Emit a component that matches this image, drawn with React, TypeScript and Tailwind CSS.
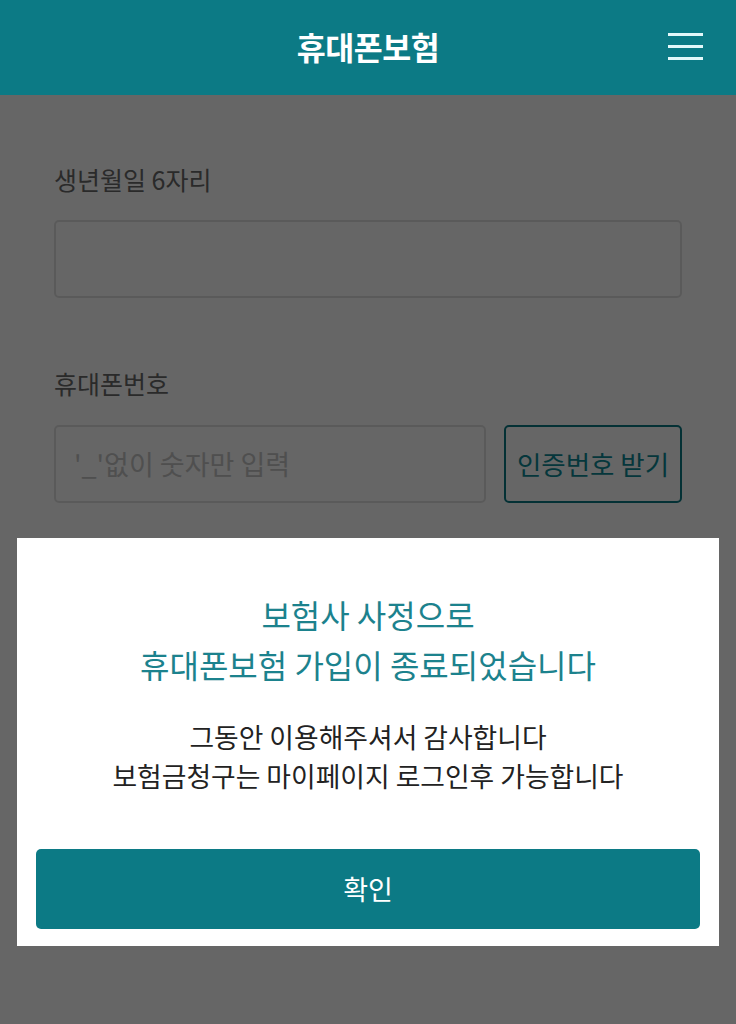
import React from "react";

const font = { fontFamily: '"Noto Sans CJK KR", "Noto Sans", sans-serif' };

export default function App() {
  return (
    <div className="relative min-h-[1024px] w-full bg-white overflow-hidden" style={font}>
      <header className="relative z-20 h-[95px] bg-[#0c7a85] flex items-center justify-center">
        <h1 className="text-[31.5px] font-bold text-white leading-none tracking-[-0.5px] -mt-[2px]">휴대폰보험</h1>
        <button className="absolute right-[33px] top-[33px] flex flex-col gap-[9px] w-[35px]">
          <span className="block h-[3px] w-full bg-[#e3f8fa]" />
          <span className="block h-[3px] w-full bg-[#e3f8fa]" />
          <span className="block h-[3px] w-full bg-[#e3f8fa]" />
        </button>
      </header>

      <main className="px-[54px] pt-[67px] flex flex-col">
        <label className="text-[25px] leading-[34px] text-[#6a6a6a]">생년월일 6자리</label>
        <div className="mt-[24px] h-[78px] rounded-[5px] border-2 border-[#e2e2e2]" />

        <label className="mt-[68px] text-[25px] leading-[34px] text-[#6a6a6a]">휴대폰번호</label>
        <div className="mt-[25px] flex gap-[18px]">
          <div className="flex-1 h-[78px] rounded-[5px] border-2 border-[#e2e2e2] flex items-center px-[18px]">
            <span className="text-[27px] text-[#c6c6c6]">'_'없이 숫자만 입력</span>
          </div>
          <button className="w-[178px] h-[78px] rounded-[5px] border-2 border-[#0c7a85] flex items-center justify-center text-[26.5px] text-[#0d8a96] whitespace-nowrap">
            인증번호 받기
          </button>
        </div>
      </main>

      <div className="absolute inset-0 z-10 bg-black/60" />

      <div className="absolute z-30 left-[17px] top-[538px] w-[702px] h-[408px] bg-white flex flex-col items-center px-[19px] pt-[51px] pb-[17px]">
        <p className="text-center text-[32px] leading-[50px] text-[#1c828d]">
          보험사 사정으로
          <br />
          휴대폰보험 가입이 종료되었습니다
        </p>
        <p className="mt-[28px] text-center text-[26.8px] leading-[39px] text-[#222]">
          그동안 이용해주셔서 감사합니다
          <br />
          보험금청구는 마이페이지 로그인후 가능합니다
        </p>
        <button className="mt-auto w-full h-[80px] rounded-[5px] bg-[#0c7a85] text-white text-[27px] flex items-center justify-center">
          확인
        </button>
      </div>
    </div>
  );
}
